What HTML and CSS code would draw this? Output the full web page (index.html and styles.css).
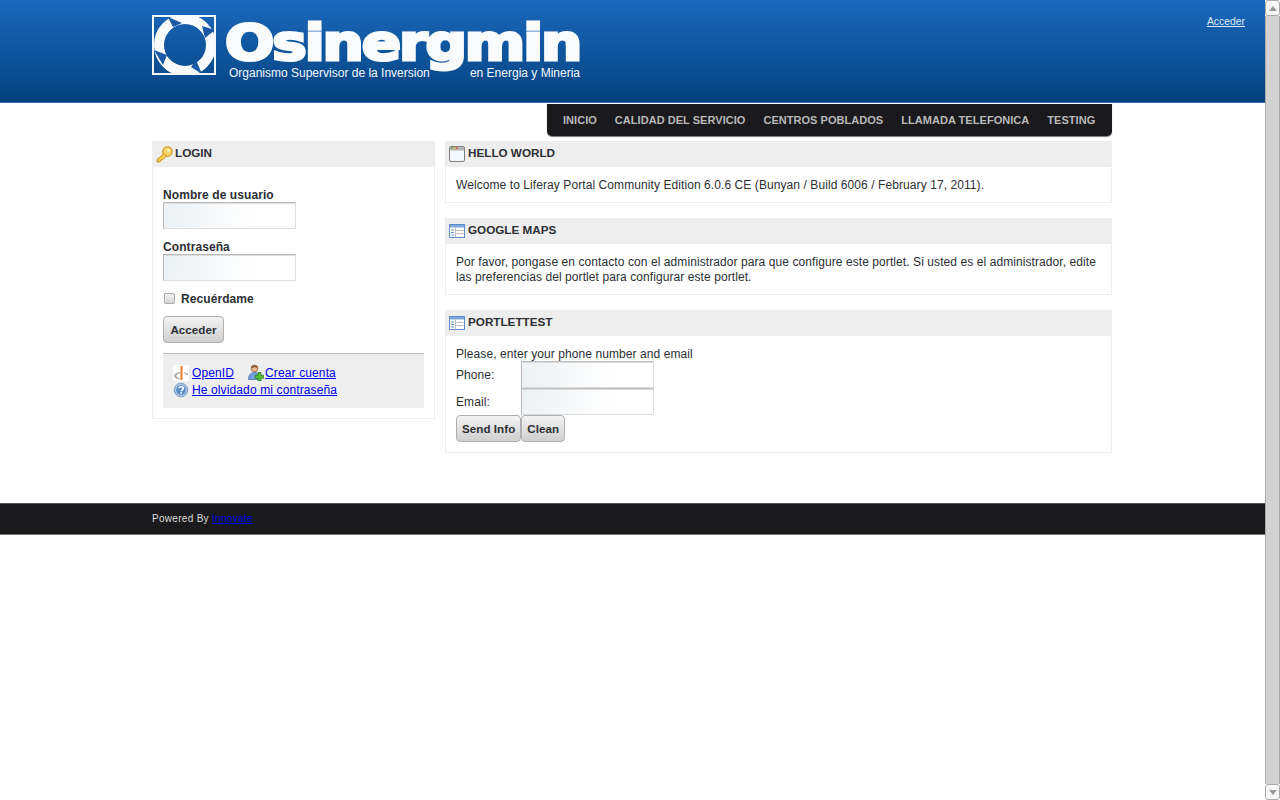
FILE: index.html
```html
<!DOCTYPE html>
<html lang="es">
<head>
  <meta charset="UTF-8">
  <title>Osinergmin</title>
  <link rel="stylesheet" href="styles.css">
</head>
<body>
  <div class="page">
    <header class="banner">
      <div class="banner-inner">
        <div class="logo">
          <svg class="logo-mark" width="64" height="60" viewBox="0 0 64 60">
            <rect x="1" y="1" width="62" height="58" fill="none" stroke="#f4f7fb" stroke-width="2"/>
            <circle cx="33" cy="30" r="26" fill="none" stroke="#f9fbfd" stroke-width="10"/>
            <path d="M16 2 L30 8 L21 12 Z M63 15 L53 23 L50 11 Z M50 59 L39 52 L44 45 Z M2 35 L15 40 L11 50 Z" fill="#1a5aa5"/>
            <rect x="1" y="1" width="62" height="58" fill="none" stroke="#f4f7fb" stroke-width="2"/>
          </svg>
          <div class="logo-text">
            <span class="logo-name">Osinergmin</span>
            <div class="logo-sub">
              <span>Organismo Supervisor de la Inversion</span>
              <span>en Energia y Mineria</span>
            </div>
          </div>
        </div>
        <a class="signin" href="#">Acceder</a>
      </div>
    </header>

    <div class="wrap">
      <nav class="menu">
        <a href="#">INICIO</a>
        <a href="#">CALIDAD DEL SERVICIO</a>
        <a href="#">CENTROS POBLADOS</a>
        <a href="#">LLAMADA TELEFONICA</a>
        <a href="#">TESTING</a>
      </nav>

      <main class="columns">
        <section class="portlet login">
          <h2 class="portlet-title">
            <svg width="17" height="17" viewBox="0 0 17 17" class="title-icon">
              <circle cx="11.5" cy="5.5" r="4.8" fill="#f8d568" stroke="#c98a14"/>
              <circle cx="12.5" cy="4.3" r="1.4" fill="#fff4c0"/>
              <path d="M8 7.5 L1 13.5 L1 16 L4 16 L5 14 L7 13.5 L10.5 10 Z" fill="#f5c94e" stroke="#c98a14" stroke-width=".9"/>
            </svg>
            LOGIN
          </h2>
          <form class="login-form">
            <label class="field-label" for="usuario">Nombre de usuario</label>
            <input class="text-input" id="usuario" type="text">
            <label class="field-label second" for="clave">Contraseña</label>
            <input class="text-input" id="clave" type="password">
            <label class="remember"><input type="checkbox" class="check"> Recuérdame</label>
            <button class="btn login-btn" type="button">Acceder</button>
          </form>
          <div class="login-links">
            <div class="link-row">
              <svg width="16" height="16" viewBox="0 0 16 16" class="link-icon">
                <rect width="16" height="16" fill="#fff"/>
                <path d="M1 10 C2 8 4.500 7.200 7 7 L7 8.400 C5 8.600 3.500 9.500 3.500 10.800 C3.500 12 5 13 7 13.300 L7 14.500 C3.500 14.300 .5 12.500 1 10 Z M10.500 7 L15 8.500 L15 10.500 L12 9 Z" fill="#b3b3b3"/>
                <rect x="7.500" y="1" width="2" height="14" fill="#f2792a"/>
              </svg>
              <a href="#">OpenID</a>
              <svg width="17" height="17" viewBox="0 0 17 17" class="link-icon user-icon">
                <circle cx="7.500" cy="4.500" r="3.400" fill="#e8b488" stroke="#8a5a35" stroke-width=".7"/>
                <path d="M4 4.200 C4.200 .6 10.800 .6 11 4.200 L8 3 Z" fill="#8a5228"/>
                <path d="M1.500 15.500 C1.500 10.500 4 8.500 7.500 8.500 C11 8.500 13 10.500 13 15.500 Z" fill="#6f9fdc" stroke="#41689c" stroke-width=".7"/>
                <path d="M11 8.500 h3 v2.800 h2.700 v3 h-2.700 v2.700 h-3 v-2.700 h-2.700 v-3 h2.700 Z" fill="#55c034" stroke="#1f6f18" stroke-width=".7"/>
              </svg>
              <a href="#">Crear cuenta</a>
            </div>
            <div class="link-row">
              <svg width="16" height="16" viewBox="0 0 16 16" class="link-icon help-icon">
                <circle cx="8" cy="8" r="6.800" fill="#a9c4e2" stroke="#7d9fc6"/>
                <circle cx="8" cy="8" r="4.800" fill="#5a8bc4"/>
                <path d="M6 6.300 C6 4.200 10.200 4.200 10.200 6.400 C10.200 8 8.200 7.800 8.200 9.300" fill="none" stroke="#fff" stroke-width="1.500"/>
                <rect x="7.400" y="10.200" width="1.600" height="1.600" fill="#fff"/>
              </svg>
              <a href="#">He olvidado mi contraseña</a>
            </div>
          </div>
        </section>

        <div class="right-col">
          <section class="portlet">
            <h2 class="portlet-title">
              <svg width="16" height="16" viewBox="0 0 16 16" class="title-icon">
                <rect x=".5" y=".5" width="15" height="15" rx="1.500" fill="#f3f9fe" stroke="#808080"/>
                <rect x="1" y="1" width="14" height="3.500" fill="#b5b5b5"/>
                <rect x="2" y="1.500" width="2" height="1.400" fill="#6bb04a"/>
                <rect x="4.500" y="1.500" width="2" height="1.400" fill="#e2c13c"/>
                <rect x="7" y="1.500" width="2" height="1.400" fill="#d9583f"/>
              </svg>
              HELLO WORLD
            </h2>
            <div class="portlet-body">
              <p>Welcome to Liferay Portal Community Edition 6.0.6 CE (Bunyan / Build 6006 / February 17, 2011).</p>
            </div>
          </section>

          <section class="portlet">
            <h2 class="portlet-title">
              <svg width="16" height="14" viewBox="0 0 16 14" class="title-icon">
                <rect x=".5" y=".5" width="15" height="13" fill="#fff" stroke="#5c8cc9"/>
                <rect x="1" y="1" width="14" height="2.500" fill="#7fa8dc"/>
                <path d="M2 6h3M2 8.500h3M2 11h3" stroke="#5c8cc9"/>
                <path d="M6.500 3.500v10M7.500 6.500h7M7.500 9.500h7" stroke="#bbb"/>
              </svg>
              GOOGLE MAPS
            </h2>
            <div class="portlet-body">
              <p>Por favor, pongase en contacto con el administrador para que configure este portlet. Si usted es el administrador, edite las preferencias del portlet para configurar este portlet.</p>
            </div>
          </section>

          <section class="portlet">
            <h2 class="portlet-title">
              <svg width="16" height="14" viewBox="0 0 16 14" class="title-icon">
                <rect x=".5" y=".5" width="15" height="13" fill="#fff" stroke="#5c8cc9"/>
                <rect x="1" y="1" width="14" height="2.500" fill="#7fa8dc"/>
                <path d="M2 6h3M2 8.500h3M2 11h3" stroke="#5c8cc9"/>
                <path d="M6.500 3.500v10M7.500 6.500h7M7.500 9.500h7" stroke="#bbb"/>
              </svg>
              PORTLETTEST
            </h2>
            <div class="portlet-body">
              <div class="test-intro">Please, enter your phone number and email</div>
              <div class="test-row"><label for="phone">Phone:</label><input class="text-input" id="phone" type="text"></div>
              <div class="test-row"><label for="email">Email:</label><input class="text-input" id="email" type="text"></div>
              <div class="test-buttons">
                <button class="btn" type="button">Send Info</button><button class="btn" type="button">Clean</button>
              </div>
            </div>
          </section>
        </div>
      </main>
    </div>

    <footer class="footer">
      <div class="footer-inner">Powered By <a href="#">Innovate</a></div>
    </footer>
  </div>

  <div class="scrollbar">
    <div class="scroll-btn"><span class="arrow-up"></span></div>
    <div class="scroll-thumb"></div>
    <div class="scroll-btn"><span class="arrow-down"></span></div>
  </div>
</body>
</html>
```

FILE: styles.css
```css
html, body {
  height: 100%;
}

body {
  margin: 0;
  display: flex;
  overflow: hidden;
  background: #fff;
  color: #2c2f34;
  font-family: "Liberation Sans", Arial, sans-serif;
  font-size: 12px;
  letter-spacing: .08px;
}

.page {
  flex: 1;
  min-width: 0;
}

a {
  color: #0000ee;
}

/* banner */
.banner {
  height: 102px;
  background: linear-gradient(#1a68bc, #04427f);
  border-bottom: 1px solid #2f6ba6;
}

.banner-inner {
  display: flex;
  justify-content: space-between;
  align-items: flex-start;
  padding-left: 152px;
  padding-right: 20px;
}

.logo {
  display: flex;
  padding-top: 15px;
  gap: 9px;
}

.logo-text {
  width: 355px;
}

.logo-name {
  display: block;
  height: 48px;
  margin-top: 3px;
  color: #f9fbfd;
  font-family: "DejaVu Sans", sans-serif;
  font-weight: bold;
  font-size: 50px;
  line-height: 50px;
  letter-spacing: -1.8px;
  -webkit-text-stroke: 3px #f9fbfd;
  white-space: nowrap;
  transform: scaleX(1.16);
  transform-origin: left;
}

.logo-sub {
  display: flex;
  justify-content: space-between;
  padding-left: 4px;
  color: #f4f7fb;
  font-size: 12px;
  line-height: 14px;
  letter-spacing: 0;
}

.signin {
  margin-top: 15px;
  color: #dfe9f4;
  font-size: 10.4px;
  line-height: 13px;
  letter-spacing: 0;
}

/* menu */
.wrap {
  width: 960px;
  margin-left: 152px;
}

.menu {
  display: flex;
  width: 565px;
  height: 32px;
  box-sizing: border-box;
  margin: 1px 0 5px auto;
  padding-left: 7px;
  background: #1a1a1c;
  border-radius: 0 0 5px 5px;
  box-shadow: 0 1px 1px #777;
}

.menu a {
  padding: 0 9px;
  color: #b9b9b9;
  font-size: 11px;
  font-weight: bold;
  line-height: 32px;
  letter-spacing: .04px;
  text-decoration: none;
}

/* columns */
.columns {
  display: flex;
  gap: 10px;
  align-items: flex-start;
}

.login {
  width: 283px;
  box-sizing: border-box;
  flex: none;
}

.right-col {
  flex: 1;
  display: flex;
  flex-direction: column;
  gap: 15px;
}

.portlet {
  border: 1px solid #eee;
}

.portlet-title {
  display: flex;
  align-items: center;
  gap: 3px;
  height: 25px;
  box-sizing: border-box;
  margin: 0;
  padding: 0 0 4px 3px;
  background: #eee;
  color: #2c2f34;
  font-size: 11.7px;
  font-weight: bold;
  letter-spacing: 0;
}

.title-icon {
  flex: none;
  margin-bottom: -3px;
}

.login .portlet-title {
  padding-left: 3px;
  gap: 2px;
}

.portlet-body {
  padding: 11px 10px 9px;
  line-height: 15px;
}

.portlet-body p {
  margin: 0;
}

/* form bits */
.text-input {
  display: block;
  width: 133px;
  height: 27px;
  box-sizing: border-box;
  margin: 0;
  padding: 0;
  background: linear-gradient(100deg, #ecf1f4, #fff 70%);
  border: 1px solid;
  border-color: #bbb #ddd #ddd #bbb;
  box-shadow: inset 0 1px 0 #ddd;
}

.btn {
  height: 27px;
  padding: 0 5px;
  background: linear-gradient(#f4f4f4, #cfcfcf);
  border: 1px solid #b0b0b0;
  border-radius: 4px;
  color: #2c2f34;
  font-family: inherit;
  font-size: 11.6px;
  font-weight: bold;
  letter-spacing: .05px;
}

.login-form {
  padding: 21px 10px 10px;
}

.field-label {
  display: block;
  font-weight: bold;
  line-height: 14px;
}

.field-label.second {
  margin-top: 11px;
}

.remember {
  display: flex;
  align-items: center;
  gap: 6px;
  margin-top: 11px;
  font-weight: bold;
  line-height: 14px;
}

.check {
  appearance: none;
  width: 11px;
  height: 11px;
  margin: 0 0 2px 1px;
  background: linear-gradient(#f4f4f4, #d5d5d5);
  border: 1px solid #aaa;
  border-radius: 2px;
}

.login-btn {
  display: block;
  min-width: 61px;
  margin-top: 10px;
}

.login-links {
  height: 55px;
  margin: 0 10px 10px;
  padding-top: 10px;
  box-sizing: border-box;
  background: #eee;
  border-top: 1px solid #bbb;
}

.link-row {
  display: flex;
  align-items: center;
  height: 17px;
  padding-left: 10px;
  letter-spacing: .12px;
}

.link-icon {
  flex: none;
  margin-right: 3px;
}

.user-icon {
  margin-left: 13px;
  margin-right: 1px;
}

.test-intro {
  margin-bottom: -1px;
}

.test-row {
  display: flex;
  align-items: center;
}

.test-row label {
  width: 65px;
  padding-top: 1px;
}

.test-buttons {
  display: flex;
  margin-bottom: 1px;
}

/* footer */
.footer {
  height: 30px;
  margin-top: 50px;
  background: #1a1a1c;
  border-top: 1px solid #555;
  border-bottom: 1px solid #777;
}

.footer-inner {
  padding-left: 152px;
  color: #ddd;
  font-size: 10px;
  line-height: 29px;
  letter-spacing: .3px;
}

/* scrollbar */
.scrollbar {
  width: 15px;
  flex: none;
  display: flex;
  flex-direction: column;
  background: #fff;
}

.scroll-btn {
  display: flex;
  align-items: center;
  justify-content: center;
  height: 14px;
  border: 1px solid #aaa;
  border-radius: 3px;
  background: #f7f7f7;
}

.scroll-thumb {
  flex: 1;
  background: #d2d2d2;
  border-left: 1px solid #aaa;
  border-right: 1px solid #aaa;
}

.arrow-up {
  border-left: 4px solid transparent;
  border-right: 4px solid transparent;
  border-bottom: 5px solid #999;
}

.arrow-down {
  border-left: 4px solid transparent;
  border-right: 4px solid transparent;
  border-top: 5px solid #999;
}
```
